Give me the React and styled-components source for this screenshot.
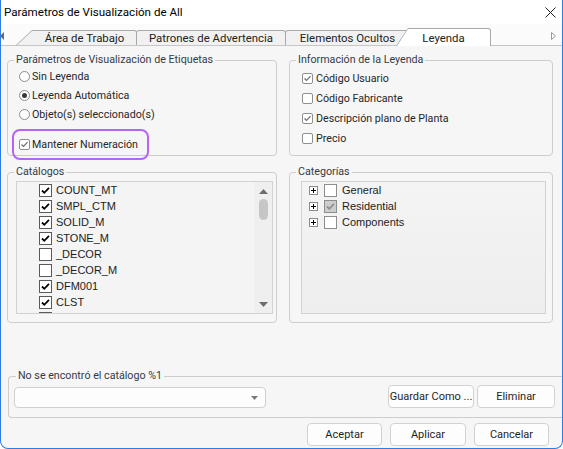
import React from 'react';
import styled, { createGlobalStyle } from 'styled-components';

const GlobalStyle = createGlobalStyle`
  html, body { margin: 0; padding: 0; background: #ffffff; }
  body { font-family: Roboto, "Liberation Sans", sans-serif; }
  * { box-sizing: border-box; }
`;

const catalogs = [
    { name: 'COUNT_MT', on: true },
    { name: 'SMPL_CTM', on: true },
    { name: 'SOLID_M', on: true },
    { name: 'STONE_M', on: true },
    { name: '_DECOR', on: false },
    { name: '_DECOR_M', on: false },
    { name: 'DFM001', on: true },
    { name: 'CLST', on: true },
    { name: '', on: false },
];

const categories = [
    { name: 'General', on: false },
    { name: 'Residential', on: true },
    { name: 'Components', on: false },
];

const tabs = [
    { label: 'Área de Trabajo', w: 121, slant: 16, pad: 16 },
    { label: 'Patrones de Advertencia', w: 150, slant: 0, overlap: -1 },
    { label: 'Elementos Ocultos', w: 125, slant: 0, overlap: -1 },
    { label: 'Leyenda', w: 95, slant: 12, overlap: -14, active: true },
];

export default function App() {
    return (
        <>
            <GlobalStyle />
            <Window>
                <TitleBar>
                    <span>Parámetros de Visualización de All</span>
                    <svg width="11" height="11" viewBox="0 0 11 11">
                        <path d="M0.5 0.5 L10.5 10.5 M10.5 0.5 L0.5 10.5" stroke="#1f1f1f" strokeWidth="1" />
                    </svg>
                </TitleBar>

                <TabStrip>
                    <ArrowSlot $w={15}>
                        <svg width="15" height="21" viewBox="0 0 15 21">
                            <path d="M-1 12 L3 8 L3 16 Z" fill="#6a6a6a" />
                        </svg>
                    </ArrowSlot>
                    {tabs.map(t => (
                        <TabOuter key={t.label} $w={t.w} $slant={t.slant} $overlap={t.overlap} $active={t.active}>
                            <TabInner $slant={t.slant} $pad={t.pad} $active={t.active}>{t.label}</TabInner>
                        </TabOuter>
                    ))}
                    <ArrowSlot $w={16} style={{ marginLeft: 'auto' }}>
                        <svg width="16" height="21" viewBox="0 0 16 21">
                            <path d="M5.5 8.5 L9.5 12 L5.5 15.5 Z" fill="none" stroke="#9a9a9a" />
                        </svg>
                    </ArrowSlot>
                </TabStrip>

                <Panels>
                    <GroupBox>
                        <Legend>Parámetros de Visualización de Etiquetas</Legend>
                        <OptionList $pad={11}>
                            <OptionRow $h={19} $gap={2}><Radio /> Sin Leyenda</OptionRow>
                            <OptionRow $h={19} $gap={2}><Radio $checked /> Leyenda Automática</OptionRow>
                            <OptionRow $h={19} $gap={2}><Radio /> Objeto(s) seleccionado(s)</OptionRow>
                            <HighlightRow $h={19} $gap={2}>
                                <FlatCheck checked /> Mantener Numeración
                                <Highlight />
                            </HighlightRow>
                        </OptionList>
                    </GroupBox>

                    <GroupBox>
                        <Legend>Información de la Leyenda</Legend>
                        <OptionList $pad={12} $top={1}>
                            <OptionRow $h={20} $gap={3}><FlatCheck checked /> Código Usuario</OptionRow>
                            <OptionRow $h={20} $gap={3}><FlatCheck /> Código Fabricante</OptionRow>
                            <OptionRow $h={20} $gap={3}><FlatCheck checked /> Descripción plano de Planta</OptionRow>
                            <OptionRow $h={20} $gap={3}><FlatCheck /> Precio</OptionRow>
                        </OptionList>
                    </GroupBox>

                    <GroupBox>
                        <Legend>Catálogos</Legend>
                        <ListBox $left={8} $width={257}>
                            <ListItems $pad={22}>
                                {catalogs.map((c, i) => (
                                    <ListRow key={i} $gap={4}>
                                        <ClassicCheck checked={c.on} />
                                        {c.name && <span>{c.name}</span>}
                                    </ListRow>
                                ))}
                            </ListItems>
                            <ScrollTrack>
                                <svg width="9" height="5" viewBox="0 0 9 5"><path d="M0 5 L4.5 0 L9 5 Z" fill="#6d6d6d" /></svg>
                                <Thumb />
                                <svg width="9" height="5" viewBox="0 0 9 5" style={{ marginTop: 'auto' }}><path d="M0 0 L4.5 5 L9 0 Z" fill="#6d6d6d" /></svg>
                            </ScrollTrack>
                        </ListBox>
                    </GroupBox>

                    <GroupBox>
                        <Legend>Categorías</Legend>
                        <ListBox $left={11} $width={245} $tree>
                            <ListItems $pad={7}>
                                {categories.map(c => (
                                    <ListRow key={c.name} $gap={5}>
                                        <svg width="9" height="9" viewBox="0 0 9 9" style={{ marginRight: 1 }}>
                                            <rect x="0.5" y="0.5" width="8" height="8" fill="#fff" stroke="#8c8c8c" />
                                            <path d="M2 4.5 H7 M4.5 2 V7" stroke="#000" />
                                        </svg>
                                        <TreeCheck checked={c.on} />
                                        <span>{c.name}</span>
                                    </ListRow>
                                ))}
                            </ListItems>
                        </ListBox>
                    </GroupBox>
                </Panels>

                <FooterGroup>
                    <Legend $left={7}>No se encontró el catálogo %1</Legend>
                    <FooterRow>
                        <Combo>
                            <svg width="7" height="4" viewBox="0 0 7 4"><path d="M0 0 L3.5 4 L7 0 Z" fill="#7a7a7a" /></svg>
                        </Combo>
                        <ButtonGroup $gap={3}>
                            <Button $w={86}>Guardar Como ...</Button>
                            <Button $w={78}>Eliminar</Button>
                        </ButtonGroup>
                    </FooterRow>
                </FooterGroup>

                <DialogButtons>
                    <Button $w={75}>Aceptar</Button>
                    <Button $w={76}>Aplicar</Button>
                    <Button $w={75}>Cancelar</Button>
                </DialogButtons>
            </Window>
        </>
    );
}

function FlatCheck({ checked }) {
    return (
        <FlatBox>
            {checked && (
                <svg width="9" height="9" viewBox="0 0 9 9">
                    <path d="M1.5 4.5 L3.5 6.5 L7.5 2.2" fill="none" stroke="#6e6e6e" strokeWidth="1.2" />
                </svg>
            )}
        </FlatBox>
    );
}

function ClassicCheck({ checked }) {
    return (
        <ClassicBox>
            {checked && (
                <svg width="11" height="11" viewBox="0 0 11 11">
                    <path d="M2 5.5 L4.3 7.8 L9 2.8" fill="none" stroke="#000" strokeWidth="1.8" />
                </svg>
            )}
        </ClassicBox>
    );
}

function TreeCheck({ checked }) {
    return (
        <TreeBox $checked={checked}>
            {checked && (
                <svg width="11" height="11" viewBox="0 0 11 11">
                    <path d="M2 5.5 L4.3 7.8 L9 2.8" fill="none" stroke="#8e8e8e" strokeWidth="1.8" />
                </svg>
            )}
        </TreeBox>
    );
}

const uiFont = 'Roboto, "Liberation Sans", sans-serif';

const Window = styled.div`
    width: 563px;
    height: 449px;
    display: flex;
    flex-direction: column;
    background: #f6f6f6;
    border: 1px solid #2d7be5;
    border-top: none;
    border-radius: 0 0 8px 8px;
    overflow: hidden;
    color: #1b1b1b;
`;

const TitleBar = styled.div`
    height: 24px;
    flex: none;
    display: flex;
    align-items: center;
    justify-content: space-between;
    padding: 0 6px 0 3px;
    background: #ffffff;
    font: 11.6px ${uiFont};
    color: #000;
`;

const TabStrip = styled.div`
    height: 22px;
    flex: none;
    display: flex;
    align-items: flex-end;
    background: #fbfbfb;
    border-bottom: 1px solid #c6c6c6;
`;

const ArrowSlot = styled.div`
    width: ${p => p.$w}px;
    align-self: stretch;
    flex: none;
    display: flex;
    align-items: flex-start;
`;

const TabOuter = styled.div`
    width: ${p => p.$w}px;
    height: ${p => p.$active ? 18 : 15}px;
    margin-left: ${p => p.$overlap || 0}px;
    margin-bottom: ${p => p.$active ? -1 : 0}px;
    flex: none;
    display: flex;
    padding: 1px 1px 0 1px;
    background: #a9a9a9;
    border-radius: 3px 3px 0 0;
    clip-path: polygon(0 100%, ${p => p.$slant}px 0, 100% 0, 100% 100%);
`;

const TabInner = styled.div`
    flex: 1;
    display: flex;
    align-items: center;
    justify-content: center;
    padding-left: ${p => p.$pad || 0}px;
    background: ${p => p.$active ? '#ffffff' : '#f1f1f1'};
    border-radius: 2px 2px 0 0;
    clip-path: polygon(0 100%, ${p => Math.max(p.$slant - 1, 0)}px 0, 100% 0, 100% 100%);
    font: 11.4px ${uiFont};
    color: #222;
    white-space: nowrap;
`;

const Panels = styled.div`
    display: grid;
    grid-template-columns: 270px 264px;
    grid-template-rows: 96px 151px;
    column-gap: 12px;
    row-gap: 16px;
    padding: 14px 0 0 6px;
`;

const GroupBox = styled.div`
    display: flex;
    flex-direction: column;
    min-height: 0;
    border: 1px solid #cdcdcd;
    border-radius: 4px;
`;

const Legend = styled.div`
    align-self: flex-start;
    margin: -8px 0 0 ${p => p.$left || 6}px;
    padding: 0 2px;
    background: #f6f6f6;
    font: 10.7px/14px ${uiFont};
    color: #343b47;
    white-space: nowrap;
`;

const OptionList = styled.div`
    display: flex;
    flex-direction: column;
    padding-left: ${p => p.$pad}px;
    margin-top: ${p => p.$top || 0}px;
`;

const OptionRow = styled.div`
    display: flex;
    align-items: center;
    gap: ${p => p.$gap}px;
    height: ${p => p.$h}px;
    font: 10.7px ${uiFont};
    color: #262626;
    white-space: nowrap;
`;

const HighlightRow = styled(OptionRow)`
    position: relative;
    margin-top: 11px;
`;

const Highlight = styled.div`
    position: absolute;
    left: -7px;
    top: -6px;
    width: 137px;
    height: 31px;
    border: 2px solid #b565f2;
    border-radius: 8px;
    pointer-events: none;
`;

const Radio = styled.span`
    width: 11px;
    height: 11px;
    flex: none;
    border-radius: 50%;
    border: 1px solid #8d8d8d;
    background: #fff;
    display: flex;
    align-items: center;
    justify-content: center;
    &::after {
        content: '';
        width: 5px;
        height: 5px;
        border-radius: 50%;
        background: ${p => p.$checked ? '#3a3a3a' : 'transparent'};
    }
`;

const FlatBox = styled.span`
    width: 11px;
    height: 11px;
    flex: none;
    border: 1px solid #8f8f8f;
    border-radius: 2px;
    background: #fff;
    display: flex;
    align-items: center;
    justify-content: center;
`;

const ClassicBox = styled.span`
    width: 13px;
    height: 13px;
    flex: none;
    border: 1px solid #5a5a5a;
    background: #fff;
    display: flex;
    align-items: center;
    justify-content: center;
`;

const TreeBox = styled(ClassicBox)`
    border-color: #8d8d8d;
    background: ${p => p.$checked ? '#cdcdcd' : '#fff'};
`;

const ListBox = styled.div`
    display: flex;
    width: ${p => p.$width}px;
    height: 133px;
    margin: 2px 0 0 ${p => p.$left}px;
    border: 1px solid #d2d2d2;
    background: ${p => p.$tree ? 'linear-gradient(#f4f4f4, #eeeeee)' : '#f4f4f4'};
    overflow: hidden;
`;

const ListItems = styled.div`
    flex: 1;
    display: flex;
    flex-direction: column;
    padding-left: ${p => p.$pad}px;
    overflow: hidden;
`;

const ListRow = styled.div`
    display: flex;
    align-items: center;
    gap: ${p => p.$gap}px;
    height: 16px;
    flex: none;
    font: 11px "Liberation Sans", Arial, sans-serif;
    color: #1c1c1c;
    white-space: nowrap;
`;

const ScrollTrack = styled.div`
    width: 18px;
    flex: none;
    display: flex;
    flex-direction: column;
    align-items: center;
    padding: 7px 0 6px;
    background: #efefef;
`;

const Thumb = styled.div`
    width: 9px;
    height: 21px;
    margin-top: 5px;
    border-radius: 5px;
    background: #c6c6c6;
`;

const FooterGroup = styled.div`
    height: 42px;
    flex: none;
    margin: 53px 0 0 7px;
    display: flex;
    flex-direction: column;
    border: 1px solid #cdcdcd;
    border-right: none;
    border-radius: 4px 0 0 4px;
`;

const FooterRow = styled.div`
    display: flex;
    align-items: flex-end;
    height: 23px;
    margin-top: 2px;
    padding: 0 7px 0 5px;
`;

const Combo = styled.div`
    width: 252px;
    height: 21px;
    display: flex;
    align-items: center;
    justify-content: flex-end;
    padding-right: 7px;
    border: 1px solid #d0d0d0;
    border-radius: 4px;
    background: #fdfdfd;
`;

const ButtonGroup = styled.div`
    display: flex;
    gap: ${p => p.$gap}px;
    margin-left: auto;
`;

const Button = styled.button`
    width: ${p => p.$w}px;
    height: 23px;
    padding: 0;
    border: 1px solid #d2d2d2;
    border-radius: 4px;
    background: #fdfdfd;
    font: 11px ${uiFont};
    color: #1f1f1f;
    white-space: nowrap;
`;

const DialogButtons = styled.div`
    display: flex;
    justify-content: flex-end;
    gap: 8px;
    margin-top: 5px;
    padding-right: 13px;
`;
